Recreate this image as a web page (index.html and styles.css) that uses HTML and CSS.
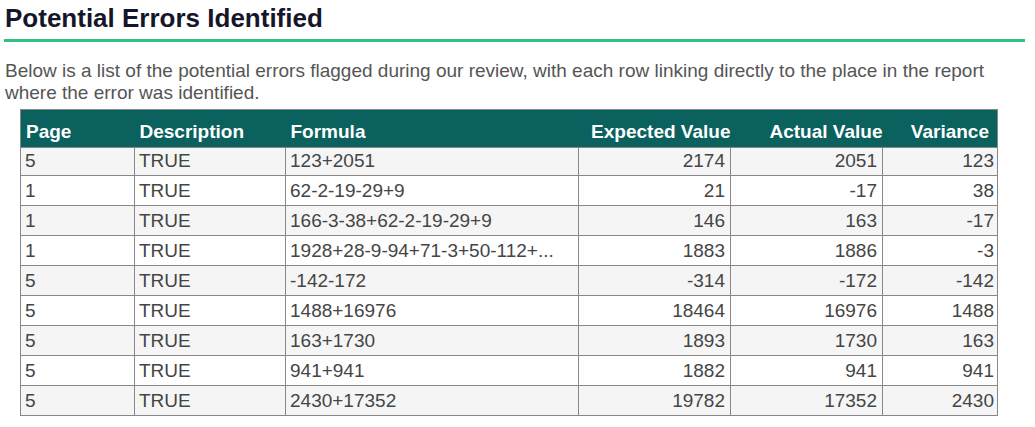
FILE: index.html
```html
<!DOCTYPE html>
<html>
<head>
<meta charset="utf-8">
<link rel="stylesheet" href="styles.css">
</head>
<body>
<section class="section">
  <h1 class="title">Potential Errors Identified</h1>
  <p class="intro">Below is a list of the potential errors flagged during our review, with each row linking directly to the place in the report where the error was identified.</p>
  <table class="errors">
    <colgroup>
      <col class="c-page"><col class="c-desc"><col class="c-formula"><col class="c-exp"><col class="c-act"><col class="c-var">
    </colgroup>
    <thead>
      <tr>
        <th class="left">Page</th>
        <th class="left">Description</th>
        <th class="left">Formula</th>
        <th class="num tight">Expected Value</th>
        <th class="num tight">Actual Value</th>
        <th class="num last">Variance</th>
      </tr>
    </thead>
    <tbody>
      <tr><td>5</td><td>TRUE</td><td>123+2051</td><td class="num">2174</td><td class="num">2051</td><td class="num last">123</td></tr>
      <tr><td>1</td><td>TRUE</td><td>62-2-19-29+9</td><td class="num">21</td><td class="num">-17</td><td class="num last">38</td></tr>
      <tr><td>1</td><td>TRUE</td><td>166-3-38+62-2-19-29+9</td><td class="num">146</td><td class="num">163</td><td class="num last">-17</td></tr>
      <tr><td>1</td><td>TRUE</td><td>1928+28-9-94+71-3+50-112+...</td><td class="num">1883</td><td class="num">1886</td><td class="num last">-3</td></tr>
      <tr><td>5</td><td>TRUE</td><td>-142-172</td><td class="num">-314</td><td class="num">-172</td><td class="num last">-142</td></tr>
      <tr><td>5</td><td>TRUE</td><td>1488+16976</td><td class="num">18464</td><td class="num">16976</td><td class="num last">1488</td></tr>
      <tr><td>5</td><td>TRUE</td><td>163+1730</td><td class="num">1893</td><td class="num">1730</td><td class="num last">163</td></tr>
      <tr><td>5</td><td>TRUE</td><td>941+941</td><td class="num">1882</td><td class="num">941</td><td class="num last">941</td></tr>
      <tr><td>5</td><td>TRUE</td><td>2430+17352</td><td class="num">19782</td><td class="num">17352</td><td class="num last">2430</td></tr>
    </tbody>
  </table>
</section>
</body>
</html>
```
FILE: styles.css
```css
html, body {
  margin: 0;
  padding: 0;
  background: #ffffff;
}
body {
  font-family: "Liberation Sans", Arial, Helvetica, sans-serif;
}
.section {
  padding: 0 10px 0 4px;
}
.title {
  margin: 3px 0 0 0;
  padding: 0 0 6px 1px;
  font-size: 26px;
  line-height: 30px;
  font-weight: bold;
  color: #16162a;
  border-bottom: 3px solid #33c07f;
}
.intro {
  margin: 18px 0 5px 1px;
  font-size: 19px;
  line-height: 22px;
  color: #555555;
}
.errors {
  margin-left: 16px;
  width: 978px;
  table-layout: fixed;
  border-collapse: collapse;
  border: 1px solid #888888;
  font-size: 19px;
}
.c-page { width: 114px; }
.c-desc { width: 151px; }
.c-formula { width: 293px; }
.c-exp { width: 152px; }
.c-act { width: 152px; }
.c-var { width: 115px; }
.errors th {
  background: #0a615e;
  color: #ffffff;
  font-weight: bold;
  font-size: 19px;
  line-height: 21px;
  padding: 11px 5px 5px 5px;
  white-space: nowrap;
  border: none;
}
.errors th.left { text-align: left; }
.errors th.num { text-align: right; }
.errors th.tight { padding-right: 0; }
.errors th.last { padding-right: 8px; }
.errors td {
  color: #454545;
  border: 1px solid #888888;
  line-height: 20px;
  padding: 5px 4px 4px 4px;
  height: 20px;
  white-space: nowrap;
  overflow: hidden;
}
.errors tbody tr:first-child td {
  padding-top: 3px;
  padding-bottom: 4px;
}
.errors tbody tr:nth-child(odd) td {
  background: #f5f5f5;
}
.errors td.num {
  text-align: right;
  padding-right: 5px;
}
.errors td.last {
  padding-right: 3px;
}
```
